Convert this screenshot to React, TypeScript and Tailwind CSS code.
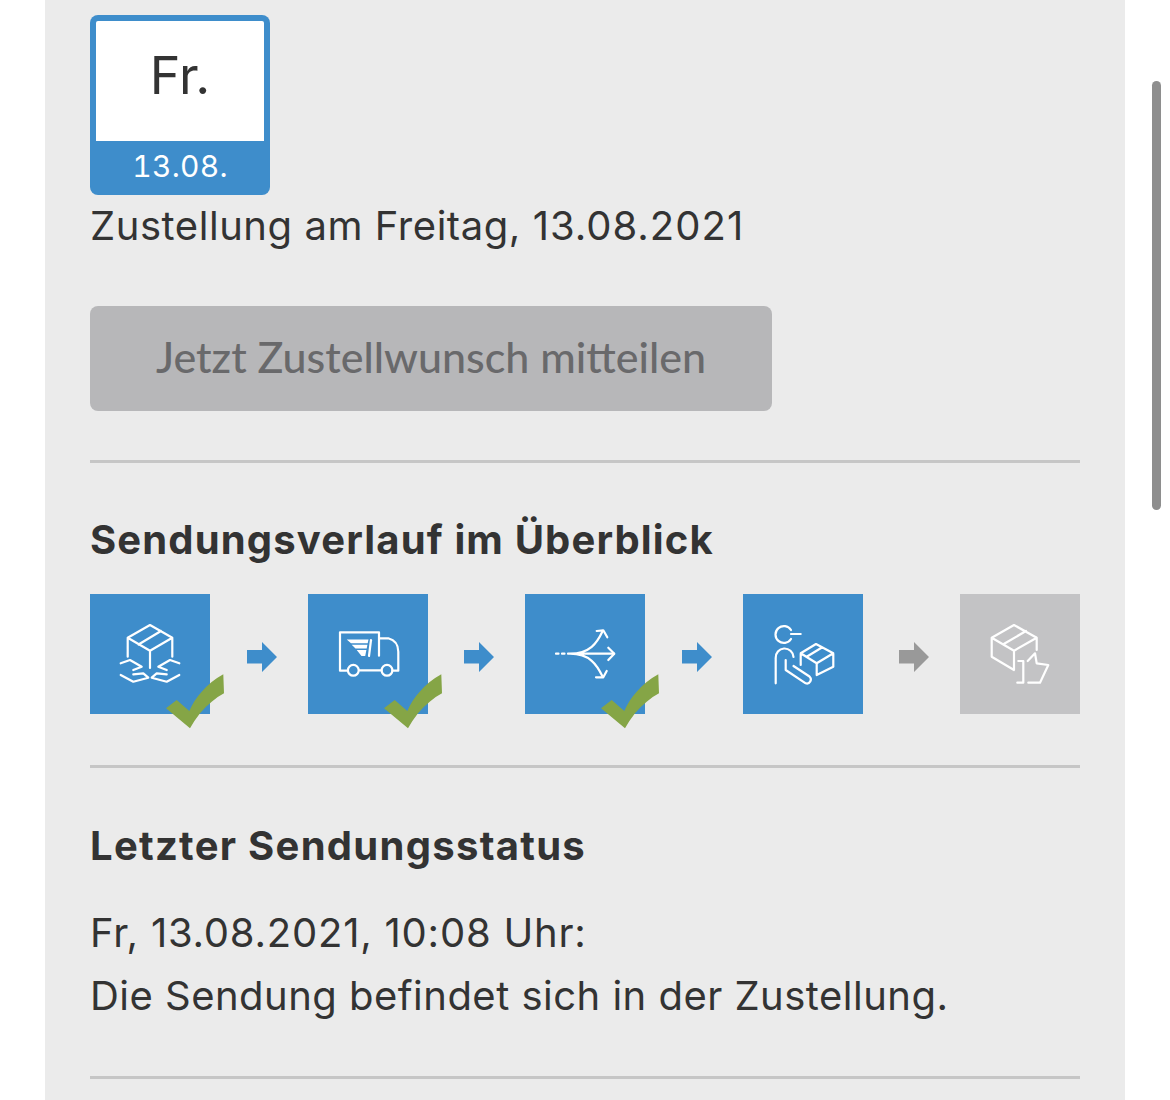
import React from "react";

const Check = () => (
  <svg className="absolute left-[76px] top-[80px] w-[60px] h-[56px]" viewBox="0 0 60 56">
    <path d="M0 34.3 L10.7 26 L23.3 37 Q28 26 35.7 17.7 Q45 7 57.3 0.3 L58 19.3 Q51 23 45.7 27.7 Q39 33 34 39.3 Q28 47 24 54.3 Z" fill="#85a546" />
  </svg>
);

const Arrow = ({ color }: { color: string }) => (
  <svg className="w-[30px] h-[30px] ml-[6px] mt-[6px] shrink-0" viewBox="0 0 30 30">
    <path d="M0 8 H15 V0 L30 15 L15 30 V21.5 H0 Z" fill={color} />
  </svg>
);

const Ico = ({ children }: { children: React.ReactNode }) => (
  <svg className="w-[120px] h-[120px]" viewBox="0 0 120 120" fill="none" stroke="#fff" strokeWidth="2.2" strokeLinejoin="round" strokeLinecap="round">
    {children}
  </svg>
);

const Tile = ({ gray, check, children }: { gray?: boolean; check?: boolean; children: React.ReactNode }) => (
  <div className={gray ? "relative w-[120px] h-[120px] shrink-0 bg-[#c3c3c5]" : "relative w-[120px] h-[120px] shrink-0 bg-[#3e8dcb]"}>
    {children}
    {check ? <Check /> : null}
  </div>
);

const BoxHands = () => (
  <Ico>
    <path d="M37.7 62.7 V43.7 L60 31 L82.3 43.7 V62.7 M37.7 43.7 L60 56.7 L82.3 43.7 M60 56.7 V74 M71 37 L48.5 50.5" />
    <path d="M30.7 69.3 L40 66 L51.7 72.7 L43.3 76 M30.7 81 L43.3 87.7 L58.3 83.7 L53.3 79.3 L43.3 80.3" />
    <path d="M89.3 69.3 L80 66 L68.3 72.7 L76.7 76 M89.3 81 L76.7 87.7 L61.7 83.7 L66.7 79.3 L76.7 80.3" />
  </Ico>
);

const Truck = () => (
  <Ico>
    <path d="M71 61.7 V38.3 H32 V76.7 H39.7 M72 44.3 H80.3 Q90.3 47 90.3 57.7 V76.7 H84.5 M51 76.3 H73.5" />
    <circle cx="45.3" cy="76.3" r="5.4" />
    <circle cx="79" cy="76.3" r="5.4" />
    <path d="M38.7 45.5 H60.5 L59.7 49.3 H43 Z M43.7 50.8 H59.4 L58.7 54.5 H47.5 Z M48.7 56 H58.4 L57.2 62 H53.5 Z" fill="#fff" stroke="none" />
    <path d="M63 46 L61 62" />
  </Ico>
);

const Fork = () => (
  <Ico>
    <path d="M31 59.7 H33.5 M37 59.7 H39.5 M43 59.7 H89 M45 59.7 C65 59.7 72 49 77.7 37 M45 59.7 C65 59.7 72 71 77.7 82.7" />
    <path d="M71.7 37 L78.3 36.3 L82.3 43.3 M83.3 53.7 L89.3 59.7 L83.3 66 M71 83.3 L78.3 83.3 L81.7 77" />
  </Ico>
);

const Person = () => (
  <Ico>
    <path d="M48 36 A8.4 8.4 0 1 0 48 45 M48 40 H57.7" />
    <path d="M32.7 89.3 V64 A9 9 0 0 1 41 54.5 A9 9 0 0 1 50.5 63 M42.7 66 V76 L62.7 89.3 A4 4 0 0 0 66.5 82.5 L50.5 72" />
    <path d="M57.7 71 V59.3 L73 50 L90.3 59.3 V72.7 L73.7 81 V69.3 L57.7 59.3 M73.7 69.3 L90.3 59.3 M63.7 62.7 L79.3 53.3" />
  </Ico>
);

const BoxThumb = () => (
  <Ico>
    <path d="M54 76 L31.7 62.7 V43.7 L54 31 L76.7 43.7 V56 M31.7 43.7 L54 56.7 L76.7 43.7 M54 56.7 V76 M43.3 50.3 L66 37" />
    <path d="M58.3 67 H63.3 V88.7 H57.3 M67.7 67 L75 59.3 L76.7 69.3 L88.3 71 L80 88.7 H68.3" />
  </Ico>
);

export default function App() {
  return (
    <div className="relative w-[1170px] h-[1100px] overflow-hidden bg-white font-['Inter','Liberation_Sans',sans-serif] text-[#333333]">
      <div className="ml-[45px] w-[1080px] h-[1100px] bg-[#ebebeb] px-[45px] pt-[15px]">
        <div className="w-[180px] h-[180px] rounded-[8px] bg-[#3e8dcb] pt-[6px] px-[6px] flex flex-col">
          <div className="h-[120px] bg-white flex items-center justify-center pb-[11px] text-[52px] leading-none rounded-t-[2px]">Fr.</div>
          <div className="flex-1 flex items-center justify-center pb-[5px] text-white text-[30px] leading-none tracking-[0.3px] tabular-nums">13.08.</div>
        </div>
        <p className="text-[40px] leading-[61px] tracking-[0.55px]">Zustellung am Freitag, <span className="tracking-[1px]">13.08.2021</span></p>
        <div className="mt-[50px] w-[682px] h-[105px] rounded-[8px] bg-[#b7b7b9] flex items-center justify-center pb-[2px] text-[43px] font-medium text-[#69696b] font-['Lato',sans-serif]">
          Jetzt Zustellwunsch mitteilen
        </div>
        <div className="mt-[49px] h-[3px] bg-[#c6c6c6]" />
        <h2 className="mt-[45px] text-[40px] leading-[63px] font-bold tracking-[1.15px]">Sendungsverlauf im Überblick</h2>
        <div className="mt-[23px] flex items-center justify-between">
          <Tile check><BoxHands /></Tile>
          <Arrow color="#3e8dcb" />
          <Tile check><Truck /></Tile>
          <Arrow color="#3e8dcb" />
          <Tile check><Fork /></Tile>
          <Arrow color="#3e8dcb" />
          <Tile><Person /></Tile>
          <Arrow color="#999999" />
          <Tile gray><BoxThumb /></Tile>
        </div>
        <div className="mt-[51px] h-[3px] bg-[#c6c6c6]" />
        <h2 className="mt-[46px] text-[40px] leading-[63px] font-bold tracking-[1.28px]">Letzter Sendungsstatus</h2>
        <p className="mt-[24px] text-[40px] leading-[63px] tracking-[0.78px]">Fr, 13.08.2021, 10:08 Uhr:</p>
        <p className="text-[40px] leading-[63px] tracking-[0.48px]">Die Sendung befindet sich in der Zustellung.</p>
        <div className="mt-[49px] h-[3px] bg-[#c6c6c6]" />
      </div>
      <div className="absolute left-[1152px] top-[81px] w-[9px] h-[429px] rounded-full bg-[#8e8e8e]" />
    </div>
  );
}
